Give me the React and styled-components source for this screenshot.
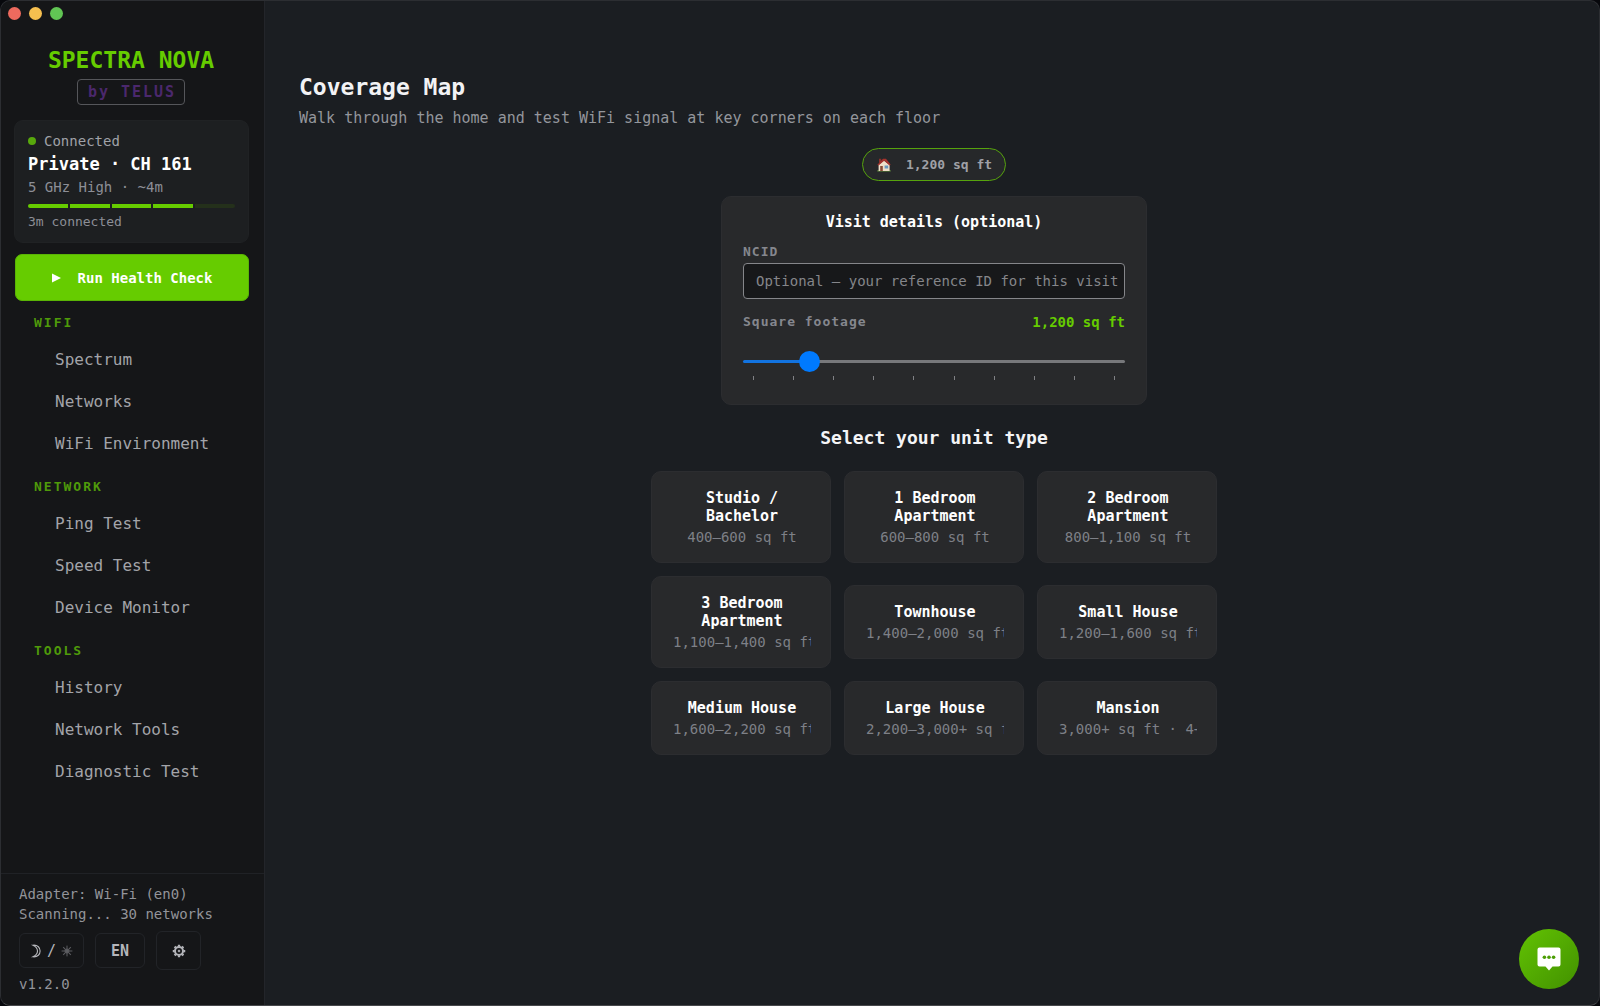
import React, { useState } from 'react';
import styled, { createGlobalStyle } from 'styled-components';

const GlobalStyle = createGlobalStyle`
  *, *::before, *::after {
    box-sizing: border-box;
  }

  body {
    margin: 0;
    background: #07080c;
    color: #ffffff;
    font-family: 'DejaVu Sans Mono', Menlo, monospace;
  }

  button, input {
    font-family: inherit;
  }
`;

const Window = styled.div`
  display: grid;
  grid-template-columns: 264px 1fr;
  min-height: 100vh;
  border: 1px solid #2c2e32;
  border-bottom-color: #47484b;
  border-radius: 10px;
  background: #1b1e22;
  overflow: hidden;
`;

// Sidebar
const Sidebar = styled.aside`
  display: flex;
  flex-direction: column;
  background: #151618;
  border-right: 1px solid #23252a;
`;

const TrafficLights = styled.div`
  display: flex;
  gap: 8px;
  padding: 6px 7px 0;
`;

const Light = styled.span`
  width: 13px;
  height: 13px;
  border-radius: 50%;
  background: ${({ $color }) => $color};
`;

const Brand = styled.div`
  display: flex;
  flex-direction: column;
  align-items: center;
  gap: 5px;
  padding: 26px 3px 0 0;
`;

const BrandName = styled.div`
  font-size: 23px;
  line-height: 28px;
  font-weight: 700;
  color: #66cc00;
`;

const BrandTag = styled.div`
  padding: 0 8px 0 10px;
  border: 1px solid #55565a;
  border-radius: 4px;
  font-size: 15px;
  line-height: 24px;
  font-weight: 700;
  letter-spacing: 2px;
  color: #4b286d;
`;

const StatusCard = styled.section`
  display: flex;
  flex-direction: column;
  margin: 15px 15px 0 13px;
  padding: 10px 13px 11px;
  border: 1px solid #202224;
  border-radius: 9px;
  background: #1d1f21;
`;

const StatusRow = styled.div`
  display: flex;
  align-items: center;
  gap: 8px;
  font-size: 14px;
  line-height: 20px;
  color: #a0a2a8;
`;

const Dot = styled.span`
  width: 8px;
  height: 8px;
  border-radius: 50%;
  background: #58a80c;
`;

const NetworkName = styled.div`
  font-size: 17px;
  line-height: 27px;
  font-weight: 700;
`;

const StatusText = styled.div`
  font-size: ${({ $small }) => ($small ? '13px' : '14px')};
  line-height: 18px;
  color: #8c8e96;
`;

const SignalBar = styled.div`
  display: grid;
  grid-template-columns: repeat(5, 1fr);
  gap: 2px;
  margin: 8px 0 5px;
  border-radius: 2px;
  overflow: hidden;
`;

const Segment = styled.span`
  height: 4px;
  background: ${({ $on }) => ($on ? '#66cc00' : '#24301b')};
`;

const HealthButton = styled.button`
  display: flex;
  align-items: center;
  justify-content: center;
  gap: 17px;
  height: 47px;
  margin: 11px 15px 0 14px;
  padding: 0;
  border: 1px solid #5ab405;
  border-radius: 7px;
  background: #66cc00;
  color: #ffffff;
  font-size: 14px;
  font-weight: 700;
  cursor: pointer;
`;

const PlayIcon = styled.svg`
  width: 9px;
  height: 10px;
  fill: currentColor;
`;

const Nav = styled.nav`
  display: flex;
  flex-direction: column;
`;

const NavHeading = styled.h2`
  margin: 0;
  padding: 12px 0 6px 33px;
  font-size: 13px;
  line-height: 20px;
  font-weight: 700;
  letter-spacing: 2px;
  color: #4f9a0a;
`;

const NavLink = styled.a`
  padding: 0 0 0 54px;
  font-size: 16px;
  line-height: 42px;
  color: #a3a4a9;
  text-decoration: none;

  &:hover {
    color: #ffffff;
  }
`;

const SidebarFooter = styled.footer`
  display: flex;
  flex-direction: column;
  margin-top: auto;
  padding: 10px 18px 11px;
  border-top: 1px solid #202226;
  font-size: 14px;
  line-height: 20px;
  color: #93949a;
`;

const FooterActions = styled.div`
  display: flex;
  align-items: center;
  gap: 11px;
  margin: 7px 0 4px;
`;

const FooterButton = styled.button`
  display: flex;
  align-items: center;
  justify-content: center;
  gap: 5px;
  width: ${({ $width }) => $width};
  height: ${({ $tall }) => ($tall ? '39px' : '35px')};
  padding: 0;
  border: 1px solid #222428;
  border-radius: 6px;
  background: transparent;
  color: #b4b5ba;
  font-size: 15px;
  font-weight: ${({ $bold }) => ($bold ? 700 : 400)};
  cursor: pointer;
`;

const SmallIcon = styled.svg`
  width: 12px;
  height: 12px;
  overflow: visible;
  color: ${({ $dim }) => ($dim ? '#5c5d61' : 'inherit')};
`;

// Main panel
const Main = styled.main`
  display: flex;
  flex-direction: column;
  padding: 71px 30px 40px 34px;
`;

const PageTitle = styled.h1`
  margin: 0;
  font-size: 23px;
  line-height: 30px;
  font-weight: 700;
  color: #f2f2f4;
`;

const PageSubtitle = styled.p`
  margin: 5px 0 0;
  font-size: 15px;
  line-height: 22px;
  color: #94969c;
`;

const Content = styled.div`
  display: flex;
  flex-direction: column;
  align-items: center;
  padding-top: 19px;
`;

const SizePill = styled.div`
  display: flex;
  align-items: center;
  gap: 15px;
  height: 33px;
  padding: 0 13px 0 14px;
  border: 1px solid #56a30d;
  border-radius: 17px;
  background: #26282a;
  font-size: 13px;
  font-weight: 700;
  color: #a0a1a7;
`;

const HouseIcon = styled.svg`
  width: 14px;
  height: 14px;
`;

const VisitCard = styled.form`
  display: flex;
  flex-direction: column;
  width: 100%;
  max-width: 426px;
  margin-top: 15px;
  padding: 14px 21px 24px;
  border: 1px solid #2c2d30;
  border-radius: 10px;
  background: #28292b;
`;

const VisitTitle = styled.h2`
  margin: 0;
  font-size: 15px;
  line-height: 22px;
  font-weight: 700;
  text-align: center;
`;

const FieldLabel = styled.label`
  font-size: 13px;
  line-height: 20px;
  font-weight: 700;
  letter-spacing: 1px;
  color: #85878e;
`;

const NcidField = styled.div`
  display: flex;
  flex-direction: column;
  gap: 1px;
  margin-top: 9px;
`;

const TextInput = styled.input`
  width: 100%;
  height: 36px;
  padding: 0 0 0 12px;
  border: 1px solid #85868a;
  border-radius: 4px;
  background: #17181a;
  color: #ffffff;
  font-size: 14px;
  outline: none;

  &::placeholder {
    color: #85868a;
    opacity: 1;
  }
`;

const FootageRow = styled.div`
  display: flex;
  align-items: center;
  justify-content: space-between;
  margin-top: 13px;
`;

const FootageValue = styled.output`
  font-size: 14px;
  line-height: 20px;
  font-weight: 700;
  color: #66cc00;
`;

const Slider = styled.input`
  appearance: none;
  width: 100%;
  height: 21px;
  margin: 19px 0 0;
  background: transparent;
  cursor: pointer;

  &::-webkit-slider-runnable-track {
    height: 3px;
    border-radius: 2px;
    background: linear-gradient(
      to right,
      #1273e0 ${({ $percent }) => $percent}%,
      #77787b ${({ $percent }) => $percent}%
    );
  }

  &::-webkit-slider-thumb {
    appearance: none;
    width: 21px;
    height: 21px;
    margin-top: -9px;
    border: none;
    border-radius: 50%;
    background: #007aff;
  }
`;

const Ticks = styled.div`
  display: flex;
  justify-content: space-between;
  margin-top: 4px;
  padding: 0 10px;
`;

const Tick = styled.span`
  width: 1px;
  height: 4px;
  background: #808185;
`;

const UnitHeading = styled.h2`
  margin: 20px 0 0;
  font-size: 18px;
  line-height: 26px;
  font-weight: 700;
  color: #f4f4f6;
`;

const UnitGrid = styled.div`
  display: grid;
  grid-template-columns: repeat(3, 180px);
  align-items: center;
  gap: 13px;
  margin-top: 20px;
`;

const UnitCard = styled.button`
  display: flex;
  flex-direction: column;
  gap: 2px;
  padding: 17px 19px 15px 21px;
  border: 1px solid #2c2d30;
  border-radius: 10px;
  background: #28292b;
  color: #ffffff;
  text-align: center;
  cursor: pointer;

  &:hover {
    border-color: #56a30d;
  }
`;

const UnitName = styled.span`
  width: 100%;
  font-size: 15px;
  line-height: 18px;
  font-weight: 700;
`;

const UnitRange = styled.span`
  width: 100%;
  font-size: 14px;
  line-height: 20px;
  color: #7e8087;
  white-space: nowrap;
  overflow: hidden;
`;

const ChatButton = styled.button`
  position: fixed;
  right: 21px;
  bottom: 17px;
  display: flex;
  align-items: center;
  justify-content: center;
  width: 60px;
  height: 60px;
  padding: 0;
  border: none;
  border-radius: 50%;
  background: linear-gradient(135deg, #62c203, #429100);
  cursor: pointer;
`;

const ChatIcon = styled.svg`
  width: 24px;
  height: 24px;
`;

const LIGHTS = ['#ed6a5e', '#f5bf4f', '#61c554'];

const NAV_SECTIONS = [
  { title: 'WIFI', items: ['Spectrum', 'Networks', 'WiFi Environment'] },
  { title: 'NETWORK', items: ['Ping Test', 'Speed Test', 'Device Monitor'] },
  { title: 'TOOLS', items: ['History', 'Network Tools', 'Diagnostic Test'] },
];

const UNITS = [
  { name: 'Studio / Bachelor', range: '400–600 sq ft' },
  { name: '1 Bedroom Apartment', range: '600–800 sq ft' },
  { name: '2 Bedroom Apartment', range: '800–1,100 sq ft' },
  { name: '3 Bedroom Apartment', range: '1,100–1,400 sq ft' },
  { name: 'Townhouse', range: '1,400–2,000 sq ft' },
  { name: 'Small House', range: '1,200–1,600 sq ft' },
  { name: 'Medium House', range: '1,600–2,200 sq ft' },
  { name: 'Large House', range: '2,200–3,000+ sq ft' },
  { name: 'Mansion', range: '3,000+ sq ft · 4+' },
];

const MIN_SQFT = 500;
const MAX_SQFT = 5000;
const SIGNAL_LEVEL = 4;

const RAY_ANGLES = [0, 45, 90, 135, 180, 225, 270, 315];

const GearIcon = () => (
  <SmallIcon viewBox="0 0 24 24" fill="none" stroke="currentColor" aria-hidden="true">
    <circle cx="12" cy="12" r="8" strokeWidth="4" />
    <circle cx="12" cy="12" r="2" fill="currentColor" strokeWidth="1" />
    {RAY_ANGLES.map((angle) => (
      <path key={angle} d="M12 3V-0.5" strokeWidth="4.5" transform={`rotate(${angle} 12 12)`} />
    ))}
  </SmallIcon>
);

const AppSidebar = () => (
  <Sidebar>
    <TrafficLights>
      {LIGHTS.map((color) => (
        <Light key={color} $color={color} />
      ))}
    </TrafficLights>

    <Brand>
      <BrandName>SPECTRA NOVA</BrandName>
      <BrandTag>by TELUS</BrandTag>
    </Brand>

    <StatusCard>
      <StatusRow>
        <Dot />
        Connected
      </StatusRow>
      <NetworkName>Private · CH 161</NetworkName>
      <StatusText>5 GHz High · ~4m</StatusText>
      <SignalBar>
        {[1, 2, 3, 4, 5].map((level) => (
          <Segment key={level} $on={level <= SIGNAL_LEVEL} />
        ))}
      </SignalBar>
      <StatusText $small>3m connected</StatusText>
    </StatusCard>

    <HealthButton type="button">
      <PlayIcon viewBox="0 0 9 10" aria-hidden="true">
        <path d="M0 0.5L9 5L0 9.5z" />
      </PlayIcon>
      Run Health Check
    </HealthButton>

    <Nav>
      {NAV_SECTIONS.map((section) => (
        <React.Fragment key={section.title}>
          <NavHeading>{section.title}</NavHeading>
          {section.items.map((item) => (
            <NavLink key={item} href="#">{item}</NavLink>
          ))}
        </React.Fragment>
      ))}
    </Nav>

    <SidebarFooter>
      <span>Adapter: Wi-Fi (en0)</span>
      <span>Scanning... 30 networks</span>
      <FooterActions>
        <FooterButton type="button" $width="65px" aria-label="Toggle theme">
          <SmallIcon viewBox="0 0 12 12" fill="none" stroke="currentColor" aria-hidden="true">
            <path d="M3 0.2C12.5 -0.8 12.5 12.8 3 11.8C9 9 9 3 3 0.2z" strokeWidth="1.1" />
          </SmallIcon>
          /
          <SmallIcon $dim viewBox="0 0 12 12" fill="none" stroke="currentColor" aria-hidden="true">
            <circle cx="6" cy="6" r="2" fill="currentColor" strokeWidth="1" />
            {RAY_ANGLES.map((angle) => (
              <path key={angle} d="M6 4V0.6" strokeWidth="1" transform={`rotate(${angle} 6 6)`} />
            ))}
          </SmallIcon>
        </FooterButton>
        <FooterButton type="button" $width="50px" $bold>EN</FooterButton>
        <FooterButton type="button" $width="45px" $tall aria-label="Settings">
          <GearIcon />
        </FooterButton>
      </FooterActions>
      <span>v1.2.0</span>
    </SidebarFooter>
  </Sidebar>
);

const App = () => {
  const [ncid, setNcid] = useState('');
  const [sqft, setSqft] = useState(1200);

  const percent = ((sqft - MIN_SQFT) / (MAX_SQFT - MIN_SQFT)) * 100;
  const sqftLabel = `${sqft.toLocaleString('en-US')} sq ft`;

  return (
    <>
      <GlobalStyle />
      <Window>
        <AppSidebar />
        <Main>
          <PageTitle>Coverage Map</PageTitle>
          <PageSubtitle>
            Walk through the home and test WiFi signal at key corners on each floor
          </PageSubtitle>

          <Content>
            <SizePill>
              <HouseIcon viewBox="0 0 14 14" aria-hidden="true">
                <path d="M0.3 12.2h13.4v1.4H0.3z" fill="#5f8a3a" />
                <path d="M2 0.8h2.2v4H2z" fill="#8c2f2a" />
                <path d="M1.6 7L6.8 2.4L12.6 7V13H1.6z" fill="#f0dfc8" />
                <path d="M0.4 6.8L6 0.8H9L13.6 6.6L12.6 7.4L7.2 2.8L1.4 7.6z" fill="#a5322c" />
                <path d="M3.2 8h2.6v5H3.2z" fill="#8a4b34" />
                <path d="M7.6 7.4h3.6v3.2H7.6z" fill="#6a97bb" />
              </HouseIcon>
              {sqftLabel}
            </SizePill>

            <VisitCard onSubmit={(e) => e.preventDefault()}>
              <VisitTitle>Visit details (optional)</VisitTitle>
              <NcidField>
                <FieldLabel htmlFor="ncid">NCID</FieldLabel>
                <TextInput
                  id="ncid"
                  type="text"
                  placeholder="Optional — your reference ID for this visit"
                  value={ncid}
                  onChange={(e) => setNcid(e.target.value)}
                />
              </NcidField>
              <FootageRow>
                <FieldLabel htmlFor="sqft">Square footage</FieldLabel>
                <FootageValue htmlFor="sqft">{sqftLabel}</FootageValue>
              </FootageRow>
              <Slider
                id="sqft"
                type="range"
                min={MIN_SQFT}
                max={MAX_SQFT}
                step={100}
                value={sqft}
                $percent={percent}
                onChange={(e) => setSqft(Number(e.target.value))}
              />
              <Ticks>
                {Array.from({ length: 10 }, (_, i) => (
                  <Tick key={i} />
                ))}
              </Ticks>
            </VisitCard>

            <UnitHeading>Select your unit type</UnitHeading>
            <UnitGrid>
              {UNITS.map((unit) => (
                <UnitCard key={unit.name} type="button">
                  <UnitName>{unit.name}</UnitName>
                  <UnitRange>{unit.range}</UnitRange>
                </UnitCard>
              ))}
            </UnitGrid>
          </Content>
        </Main>
      </Window>

      <ChatButton type="button" aria-label="Open chat">
        <ChatIcon viewBox="0 0 24 24" aria-hidden="true">
          <path d="M2.5 0.5h19a2 2 0 0 1 2 2v15a2 2 0 0 1-2 2H15.5L12 23.5L8.5 19.5H2.5a2 2 0 0 1-2-2v-15a2 2 0 0 1 2-2z" fill="#ffffff" />
          <circle cx="7.4" cy="10.2" r="1.8" fill="#4c9e05" />
          <circle cx="12" cy="10.2" r="1.8" fill="#4c9e05" />
          <circle cx="16.6" cy="10.2" r="1.8" fill="#4c9e05" />
        </ChatIcon>
      </ChatButton>
    </>
  );
};

export default App;
